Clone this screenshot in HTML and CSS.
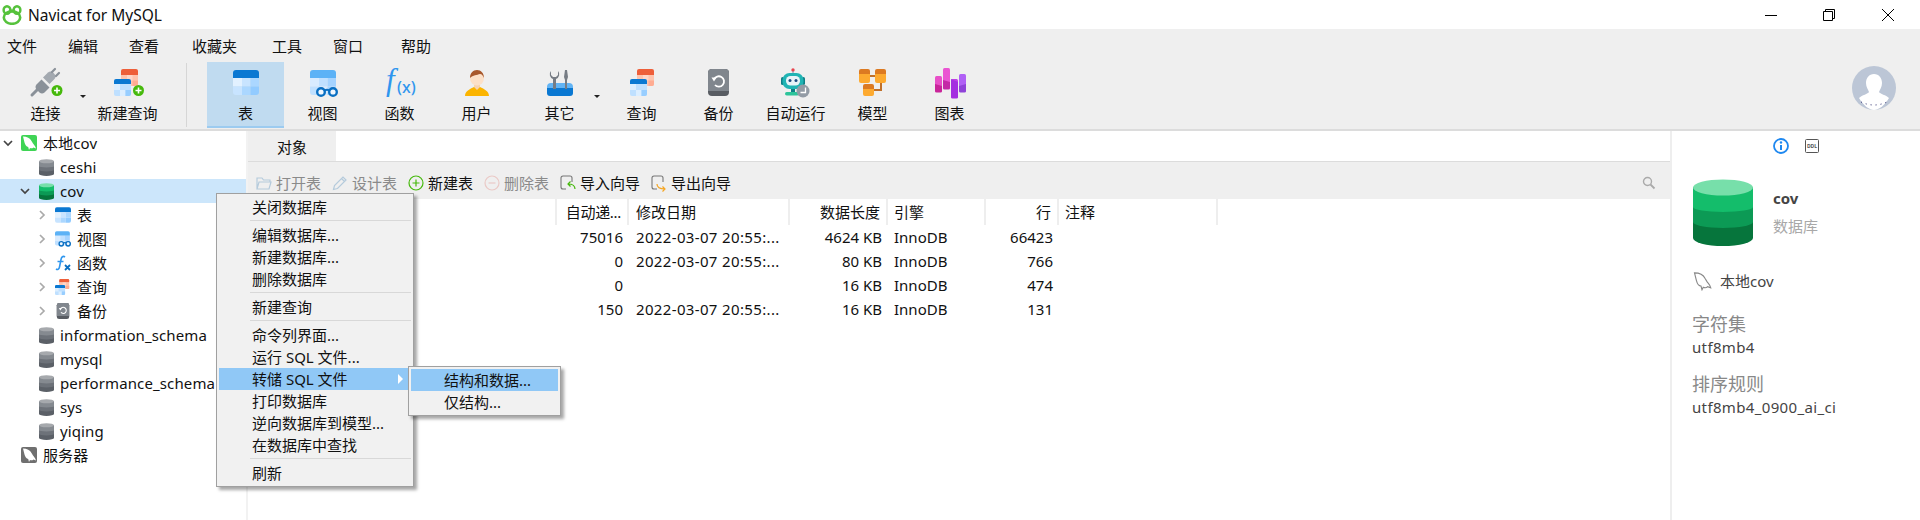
FILE: index.html
```html
<!DOCTYPE html>
<html lang="zh-CN">
<head>
    <meta charset="UTF-8">
    <title>Navicat for MySQL</title>
    <link rel="stylesheet" href="styles.css">
</head>
<body>
<svg class="defs" aria-hidden="true">
    <defs>
        <g id="i-badge">
            <circle cx="0" cy="0" r="5.5" fill="#46b90c"/>
            <path d="M-3 0H3M0-3V3" stroke="#fff" stroke-width="1.6"/>
        </g>
        <g id="i-table">
            <path d="M3 9V4a3 3 0 0 1 3-3h20a3 3 0 0 1 3 3v5z" fill="#0a78d2"/>
            <path d="M3 9h9v8.500H3z" fill="#e2f1ff"/>
            <path d="M12 9h8.500v8.500H12z" fill="#c8e4ff"/>
            <path d="M20.500 9H29v8.500h-8.500z" fill="#abd7ff"/>
            <path d="M3 17.500h9V26H6a3 3 0 0 1-3-3z" fill="#c8e4ff"/>
            <path d="M12 17.500h8.500V26H12z" fill="#abd7ff"/>
            <path d="M20.500 17.500H29V23a3 3 0 0 1-3 3h-5.500z" fill="#92cbff"/>
        </g>
        <g id="i-view">
            <path d="M3 9V4a3 3 0 0 1 3-3h20a3 3 0 0 1 3 3v5z" fill="#5cb2f6"/>
            <path d="M3 9h9v8.500H3zM12 17.500h8.500V26H12z" fill="#d8ebff"/>
            <path d="M12 9h8.500v8.500H12zM3 17.500h9V26H6a3 3 0 0 1-3-3z" fill="#c0e0ff"/>
            <path d="M20.500 9H29v8.500h-8.500z" fill="#a5d3ff"/>
            <path d="M20.500 17.500H29V23a3 3 0 0 1-3 3h-5.500z" fill="#a5d3ff"/>
            <circle cx="14" cy="23" r="3.800" fill="#f0f7ff" stroke="#0a6fc2" stroke-width="2.400"/>
            <circle cx="26" cy="23" r="3.800" fill="#f0f7ff" stroke="#0a6fc2" stroke-width="2.400"/>
            <path d="M17.500 21.500q2.500-1.500 5 0" fill="none" stroke="#0a6fc2" stroke-width="2"/>
        </g>
        <g id="i-func">
            <text x="2" y="21" class="fx-f">f</text>
            <text x="13" y="24" class="fx-x">(x)</text>
        </g>
        <g id="i-user">
            <path d="M4 27c0-5 5-7 9-9h6c4 2 9 4 9 9z" fill="#fbb400"/>
            <path d="M13 15h6v3l-3 3-3-3z" fill="#f6d3b2"/>
            <circle cx="16" cy="9.500" r="7" fill="#fce0c8"/>
            <path d="M9 9c0-5 3-8 7-8s7 3 7 8c-1-2-2-4-4-4-3 1-7 1-10 4z" fill="#a8582c"/>
        </g>
        <g id="i-plug">
            <path d="M2 26l7-7" stroke="#8a9199" stroke-width="3" stroke-linecap="round"/>
            <path d="M6.500 15.500l5-5 8 8-5 5a4 4 0 0 1-5 0l-3-3a4 4 0 0 1 0-5z" fill="#8a9199"/>
            <path d="M13 8.500l5-5a4 4 0 0 1 5 0l1.500 1.500a4 4 0 0 1 0 5l-5 5z" fill="#a3a9b0"/>
            <path d="M22 3l3-3M26 7l3-3" stroke="#8a9199" stroke-width="2.200" stroke-linecap="round"/>
        </g>
        <g id="i-query">
            <path d="M9 6V2a2 2 0 0 1 2-2h13a2 2 0 0 1 2 2v4z" fill="#ee5f3a"/>
            <path d="M9 6h17v9a2 2 0 0 1-2 2H9z" fill="#ffc4ae"/>
            <path d="M15 6h5.500v5.500H15z" fill="#ffd6c8"/>
            <path d="M20.500 11.500H26V15a2 2 0 0 1-2 2h-3.500z" fill="#ffac92"/>
            <path d="M2 16v-4a2 2 0 0 1 2-2h13a2 2 0 0 1 2 2v4z" fill="#0a78d2"/>
            <path d="M2 15h17v10a2 2 0 0 1-2 2H4a2 2 0 0 1-2-2z" fill="#bfe0ff"/>
            <path d="M2 15h6v6H2zM8 21h5.500v6H8z" fill="#dceeff"/>
            <path d="M13.500 21H19v4a2 2 0 0 1-2 2h-3.500z" fill="#98ceff"/>
        </g>
        <g id="i-backup">
            <rect x="5" y="0" width="21" height="27" rx="4" fill="#585c62"/>
            <path d="M5 22V4a4 4 0 0 1 4-4h13a4 4 0 0 1 4 4v18z" fill="#80868d"/>
            <path d="M11 10.500a5.200 5.200 0 1 1 1 5.500" fill="none" stroke="#fff" stroke-width="1.800"/>
            <path d="M8.500 8.500h5l-2.500 4z" fill="#fff"/>
        </g>
        <g id="i-tools">
            <path d="M3 18a4 4 0 0 1 4-4h18a4 4 0 0 1 4 4v3H3z" fill="#63b4f4"/>
            <path d="M3 19h26v5a3 3 0 0 1-3 3H6a3 3 0 0 1-3-3z" fill="#0a78d2"/>
            <path d="M7 2a5 5 0 0 0 2 8v10h3V10a5 5 0 0 0 2-8v4l-2 2h-3L7 6z" fill="#767c84"/>
            <path d="M21 1h2l1 7-1 3v9h-2v-9l-1-3z" fill="#767c84"/>
        </g>
        <g id="i-robot">
            <circle cx="13" cy="2" r="1.700" fill="#e8444d"/>
            <path d="M13 3v3" stroke="#88a" stroke-width="1"/>
            <rect x="1" y="9" width="3" height="8" rx="1.500" fill="#0e7f86"/>
            <rect x="22" y="9" width="3" height="8" rx="1.500" fill="#0e7f86"/>
            <rect x="2.500" y="5" width="21" height="16" rx="7" fill="#20b4b4"/>
            <rect x="6" y="8" width="14" height="9.500" rx="4.500" fill="#e8f4f8"/>
            <circle cx="10" cy="12.500" r="1.500" fill="#1c4a80"/>
            <circle cx="16" cy="12.500" r="1.500" fill="#1c4a80"/>
            <path d="M11 21h4v3h-4z" fill="#0e7f86"/>
            <rect x="5" y="24" width="14" height="3.500" rx="1.700" fill="#2dc49a"/>
            <circle cx="23" cy="23" r="6.500" fill="#939ba5"/>
            <path d="M25.500 19.500v5h-5" fill="none" stroke="#fff" stroke-width="1.300"/>
        </g>
        <g id="i-model">
            <path d="M13 7h6M24 12v9h-7" fill="none" stroke="#c0702a" stroke-width="2"/>
            <path d="M2 5V2a2 2 0 0 1 2-2h7a2 2 0 0 1 2 2v3z" fill="#dc7a22"/>
            <path d="M2 5h11v7a2 2 0 0 1-2 2H4a2 2 0 0 1-2-2z" fill="#fdaa30"/>
            <path d="M18 5V2a2 2 0 0 1 2-2h7a2 2 0 0 1 2 2v3z" fill="#dc7a22"/>
            <path d="M18 5h11v7a2 2 0 0 1-2 2h-7a2 2 0 0 1-2-2z" fill="#fdaa30"/>
            <path d="M6 20v-3a2 2 0 0 1 2-2h7a2 2 0 0 1 2 2v3z" fill="#dc7a22"/>
            <path d="M6 20h11v5a2 2 0 0 1-2 2H8a2 2 0 0 1-2-2z" fill="#fdaa30"/>
        </g>
        <g id="i-chart">
            <rect x="1" y="8" width="7" height="16" rx="1.500" fill="#e84fc8"/>
            <path d="M1 16l7 2v5a1.500 1.500 0 0 1-1.500 1.500h-4A1.500 1.500 0 0 1 1 23z" fill="#c9259a"/>
            <rect x="9" y="0" width="7" height="21" rx="1.500" fill="#ea55d2"/>
            <path d="M9 12l7 2v6a1.500 1.500 0 0 1-1.500 1.500h-4A1.500 1.500 0 0 1 9 20z" fill="#c42aa6"/>
            <rect x="17" y="11" width="7" height="19" rx="1.500" fill="#c03ce8"/>
            <path d="M17 11l7 3v15a1.500 1.500 0 0 1-1.500 1.500h-4A1.500 1.500 0 0 1 17 29z" fill="#a42ee0"/>
            <rect x="25" y="6" width="7" height="18" rx="1.500" fill="#b060f5"/>
            <path d="M25 18l7-2v7a1.500 1.500 0 0 1-1.500 1.500h-4A1.500 1.500 0 0 1 25 23z" fill="#8f42d8"/>
        </g>
        <g id="i-db-green">
            <path d="M0 8.500V59a30 8 0 0 0 60 0V8.500z" fill="#06753c"/>
            <path d="M0 8.500V43a30 6 0 0 0 60 0V8.500z" fill="#0c9a55"/>
            <path d="M0 8.500V28a30 5 0 0 0 60 0V8.500z" fill="#14bd6b"/>
            <ellipse cx="30" cy="8.500" rx="30" ry="8" fill="#77dfaa"/>
        </g>
        <g id="i-db-gray">
            <path d="M0 8.500V59a30 8 0 0 0 60 0V8.500z" fill="#5b6067"/>
            <path d="M0 8.500V43a30 6 0 0 0 60 0V8.500z" fill="#6d7279"/>
            <path d="M0 8.500V28a30 5 0 0 0 60 0V8.500z" fill="#858a90"/>
            <ellipse cx="30" cy="8.500" rx="30" ry="8" fill="#a6a9ad"/>
        </g>
        <path id="i-dolphin" d="M2 1.500C6 1.500 9 3 10.500 6L12 8.500c1 1.500 2.500 2.500 3 5l-2.500-1c-1 1-2.500 1-3.500.5l-1 2-.8-3C5.500 12 4 9.500 3.500 7.500 3 5.500 2.500 3.500 2 1.500z"/>
    </defs>
</svg>

<header class="titlebar">
    <svg class="app-logo" viewBox="0 0 20 20">
        <ellipse cx="10" cy="12.500" rx="8.200" ry="6.300" fill="none" stroke="#56c23c" stroke-width="2.600"/>
        <ellipse cx="5" cy="5" rx="3.400" ry="3.800" fill="none" stroke="#56c23c" stroke-width="2.400"/>
        <ellipse cx="15" cy="5" rx="3.400" ry="3.800" fill="none" stroke="#56c23c" stroke-width="2.400"/>
        <circle cx="10" cy="6" r="1.800" fill="#56c23c"/>
    </svg>
    <span class="app-title">Navicat for MySQL</span>
    <div class="window-controls">
        <span class="win-btn"><svg width="12" height="12" viewBox="0 0 12 12"><path d="M0 6.500h12" stroke="#000"/></svg></span>
        <span class="win-btn"><svg width="12" height="12" viewBox="0 0 12 12"><path d="M.5 2.500h9v9h-9zM2.500 2.500v-2h9v9h-2" fill="none" stroke="#000"/></svg></span>
        <span class="win-btn"><svg width="12" height="12" viewBox="0 0 12 12"><path d="M0 0l12 12M12 0L0 12" stroke="#000"/></svg></span>
    </div>
</header>

<nav class="menubar">
    <span class="menu-item w61">文件</span>
    <span class="menu-item w61">编辑</span>
    <span class="menu-item w63">查看</span>
    <span class="menu-item w80">收藏夹</span>
    <span class="menu-item w61">工具</span>
    <span class="menu-item w68">窗口</span>
    <span class="menu-item">帮助</span>
</nav>

<div class="toolbar">
    <div class="tool has-menu">
        <svg class="tool-icon" viewBox="0 0 32 28"><use href="#i-plug"/><use href="#i-badge" x="27" y="21.500"/></svg>
        <span>连接</span>
    </div>
    <div class="tool">
        <svg class="tool-icon" viewBox="0 0 32 28"><use href="#i-query"/><use href="#i-badge" x="26.500" y="21.500"/></svg>
        <span>新建查询</span>
    </div>
    <div class="tool-sep"></div>
    <div class="tool active">
        <svg class="tool-icon" viewBox="0 0 32 28"><use href="#i-table"/></svg>
        <span>表</span>
    </div>
    <div class="tool">
        <svg class="tool-icon" viewBox="0 0 32 28"><use href="#i-view"/></svg>
        <span>视图</span>
    </div>
    <div class="tool">
        <svg class="tool-icon" viewBox="0 0 32 28"><use href="#i-func"/></svg>
        <span>函数</span>
    </div>
    <div class="tool">
        <svg class="tool-icon" viewBox="0 0 32 28"><use href="#i-user"/></svg>
        <span>用户</span>
    </div>
    <div class="tool has-menu push">
        <svg class="tool-icon" viewBox="0 0 32 28"><use href="#i-tools"/></svg>
        <span>其它</span>
    </div>
    <div class="tool">
        <svg class="tool-icon" viewBox="0 0 32 28"><use href="#i-query" x="2"/></svg>
        <span>查询</span>
    </div>
    <div class="tool">
        <svg class="tool-icon" viewBox="0 0 32 28"><use href="#i-backup"/></svg>
        <span>备份</span>
    </div>
    <div class="tool">
        <svg class="tool-icon" viewBox="0 1 32 28"><use href="#i-robot"/></svg>
        <span>自动运行</span>
    </div>
    <div class="tool">
        <svg class="tool-icon" viewBox="0 0 32 28"><use href="#i-model"/></svg>
        <span>模型</span>
    </div>
    <div class="tool">
        <svg class="tool-icon" viewBox="0 1 32 28"><use href="#i-chart"/></svg>
        <span>图表</span>
    </div>
    <svg class="avatar" viewBox="0 0 44 44">
        <circle cx="22" cy="22" r="22" fill="#bcc6d6"/>
        <path d="M22 8c5 0 8 4 8 9 0 4-2 6-3 9 1 2 7 3 10 6-4 7-10 12-15 12S11 39 7 32c3-3 9-4 10-6-1-3-3-5-3-9 0-5 3-9 8-9z" fill="#fff"/>
        <path d="M9 36q13 6 26 0" fill="none" stroke="#226" stroke-width="1" stroke-dasharray="1 4"/>
    </svg>
</div>

<main class="workspace">
    <aside class="sidebar">
        <div class="tree-row level0">
            <svg class="arrow" viewBox="0 0 10 10"><path d="M1 3l4 4 4-4" class="arrow-open"/></svg>
            <svg class="conn-icon on" viewBox="0 0 16 16"><use href="#i-dolphin" fill="#fff"/></svg>
            <span>本地cov</span>
        </div>
        <div class="tree-row level1">
            <span class="arrow"></span>
            <svg class="db-icon" viewBox="0 0 60 67"><use href="#i-db-gray"/></svg>
            <span>ceshi</span>
        </div>
        <div class="tree-row level1 selected">
            <svg class="arrow" viewBox="0 0 10 10"><path d="M1 3l4 4 4-4" class="arrow-open"/></svg>
            <svg class="db-icon" viewBox="0 0 60 67"><use href="#i-db-green"/></svg>
            <span>cov</span>
        </div>
        <div class="tree-row level2">
            <svg class="arrow" viewBox="0 0 10 10"><path d="M3 1l4 4-4 4" class="arrow-closed"/></svg>
            <svg class="leaf-icon" viewBox="3 1 26 25"><use href="#i-table"/></svg>
            <span>表</span>
        </div>
        <div class="tree-row level2">
            <svg class="arrow" viewBox="0 0 10 10"><path d="M3 1l4 4-4 4" class="arrow-closed"/></svg>
            <svg class="leaf-icon" viewBox="3 1 28 27"><use href="#i-view"/></svg>
            <span>视图</span>
        </div>
        <div class="tree-row level2">
            <svg class="arrow" viewBox="0 0 10 10"><path d="M3 1l4 4-4 4" class="arrow-closed"/></svg>
            <svg class="leaf-icon" viewBox="0 0 16 16">
                <path d="M10 2C8 .5 6.500 2 6 4.500L4.500 12C4 14.500 2.500 15 1 14M2.500 6.500h6" fill="none" stroke="#2f96ee" stroke-width="1.600"/>
                <path d="M10 10l5 5M15 10l-5 5" stroke="#0a6fc2" stroke-width="1.800"/>
            </svg>
            <span>函数</span>
        </div>
        <div class="tree-row level2">
            <svg class="arrow" viewBox="0 0 10 10"><path d="M3 1l4 4-4 4" class="arrow-closed"/></svg>
            <svg class="leaf-icon" viewBox="2 0 27 27"><use href="#i-query"/></svg>
            <span>查询</span>
        </div>
        <div class="tree-row level2">
            <svg class="arrow" viewBox="0 0 10 10"><path d="M3 1l4 4-4 4" class="arrow-closed"/></svg>
            <svg class="leaf-icon" viewBox="2 0 27 27"><use href="#i-backup"/></svg>
            <span>备份</span>
        </div>
        <div class="tree-row level1">
            <span class="arrow"></span>
            <svg class="db-icon" viewBox="0 0 60 67"><use href="#i-db-gray"/></svg>
            <span>information_schema</span>
        </div>
        <div class="tree-row level1">
            <span class="arrow"></span>
            <svg class="db-icon" viewBox="0 0 60 67"><use href="#i-db-gray"/></svg>
            <span>mysql</span>
        </div>
        <div class="tree-row level1">
            <span class="arrow"></span>
            <svg class="db-icon" viewBox="0 0 60 67"><use href="#i-db-gray"/></svg>
            <span>performance_schema</span>
        </div>
        <div class="tree-row level1">
            <span class="arrow"></span>
            <svg class="db-icon" viewBox="0 0 60 67"><use href="#i-db-gray"/></svg>
            <span>sys</span>
        </div>
        <div class="tree-row level1">
            <span class="arrow"></span>
            <svg class="db-icon" viewBox="0 0 60 67"><use href="#i-db-gray"/></svg>
            <span>yiqing</span>
        </div>
        <div class="tree-row level0">
            <span class="arrow"></span>
            <svg class="conn-icon off" viewBox="0 0 16 16"><use href="#i-dolphin" fill="#fff"/></svg>
            <span>服务器</span>
        </div>
    </aside>

    <section class="content">
        <div class="tabs">
            <div class="tab">对象</div>
        </div>
        <div class="obj-toolbar">
            <span class="obj-btn disabled">
                <svg viewBox="0 0 16 16"><path d="M1 14V3h5l1.500 2H14v2M1 14l2-7h12l-2 7z" fill="none" stroke="#b5cbdc" stroke-width="1.200"/></svg>打开表
            </span>
            <span class="obj-btn disabled">
                <svg viewBox="0 0 16 16"><path d="M1.500 14.500l1-4L11 2l3 3-8.500 8.500zM9.500 3.500l3 3" fill="none" stroke="#b5cbdc" stroke-width="1.200"/></svg>设计表
            </span>
            <span class="obj-btn">
                <svg viewBox="0 0 16 16"><circle cx="8" cy="8" r="7" fill="none" stroke="#46b90c" stroke-width="1.200"/><path d="M4.500 8h7M8 4.500v7" stroke="#46b90c" stroke-width="1.200"/></svg>新建表
            </span>
            <span class="obj-btn disabled">
                <svg viewBox="0 0 16 16"><circle cx="8" cy="8" r="7" fill="none" stroke="#eac9c6" stroke-width="1.200"/><path d="M4.500 8h7" stroke="#eac9c6" stroke-width="1.200"/></svg>删除表
            </span>
            <span class="obj-btn">
                <svg viewBox="0 0 16 16"><path d="M6 14H3a2 2 0 0 1-2-2V3a2 2 0 0 1 2-2h7a2 2 0 0 1 2 2v4" fill="none" stroke="#777" stroke-width="1.100"/><path d="M15 14c0-3-2-5-7-5M10.500 6.500L8 9l2.500 2.500" fill="none" stroke="#46b90c" stroke-width="1.200"/></svg>导入向导
            </span>
            <span class="obj-btn">
                <svg viewBox="0 0 16 16"><path d="M6 14H3a2 2 0 0 1-2-2V3a2 2 0 0 1 2-2h7a2 2 0 0 1 2 2v4" fill="none" stroke="#777" stroke-width="1.100"/><path d="M6 9c0 3 2 5 8 5M11.500 11.500L14 14l-2.500 2.500" fill="none" stroke="#f5a623" stroke-width="1.200"/></svg>导出向导
            </span>
            <svg class="search-icon" viewBox="0 0 14 14"><circle cx="5.500" cy="5.500" r="4" fill="none" stroke="#aaa" stroke-width="1.400"/><path d="M8.500 8.500l4 4" stroke="#aaa" stroke-width="1.800"/></svg>
        </div>
        <div class="grid-row grid-head">
            <span></span>
            <span class="num trunc">自动递...</span>
            <span class="date-head">修改日期</span>
            <span class="num">数据长度</span>
            <span>引擎</span>
            <span class="num">行</span>
            <span>注释</span>
        </div>
        <div class="grid-row">
            <span></span>
            <span class="num">75016</span>
            <span class="date">2022-03-07 20:55:...</span>
            <span class="num">4624 KB</span>
            <span>InnoDB</span>
            <span class="num">66423</span>
            <span></span>
        </div>
        <div class="grid-row">
            <span></span>
            <span class="num">0</span>
            <span class="date">2022-03-07 20:55:...</span>
            <span class="num">80 KB</span>
            <span>InnoDB</span>
            <span class="num">766</span>
            <span></span>
        </div>
        <div class="grid-row">
            <span></span>
            <span class="num">0</span>
            <span></span>
            <span class="num">16 KB</span>
            <span>InnoDB</span>
            <span class="num">474</span>
            <span></span>
        </div>
        <div class="grid-row">
            <span></span>
            <span class="num">150</span>
            <span class="date">2022-03-07 20:55:...</span>
            <span class="num">16 KB</span>
            <span>InnoDB</span>
            <span class="num">131</span>
            <span></span>
        </div>
    </section>

    <aside class="info-panel">
        <div class="panel-tabs">
            <svg class="info-icon" viewBox="0 0 16 16"><circle cx="8" cy="8" r="7" fill="none" stroke="#1e88f0" stroke-width="1.800"/><path d="M8 7v5" stroke="#1e88f0" stroke-width="2"/><circle cx="8" cy="4.500" r="1.200" fill="#1e88f0"/></svg>
            <svg class="ddl-icon" viewBox="0 0 14 14"><rect x=".5" y=".5" width="13" height="13" rx="1" fill="none" stroke="#555"/><text x="7" y="9" class="ddl-text">DDL</text></svg>
        </div>
        <div class="panel-head">
            <svg class="panel-db" viewBox="0 0 60 67"><use href="#i-db-green"/></svg>
            <div>
                <div class="panel-name">cov</div>
                <div class="panel-type">数据库</div>
            </div>
        </div>
        <div class="panel-conn">
            <svg viewBox="0 0 16 16"><use href="#i-dolphin" fill="none" stroke="#888" stroke-width=".9"/></svg>
            本地cov
        </div>
        <div class="panel-label first">字符集</div>
        <div class="panel-value">utf8mb4</div>
        <div class="panel-label">排序规则</div>
        <div class="panel-value">utf8mb4_0900_ai_ci</div>
    </aside>

    <div class="context-menu">
        <div class="cm-item">关闭数据库</div>
        <div class="cm-sep"></div>
        <div class="cm-item">编辑数据库...</div>
        <div class="cm-item">新建数据库...</div>
        <div class="cm-item">删除数据库</div>
        <div class="cm-sep"></div>
        <div class="cm-item">新建查询</div>
        <div class="cm-sep"></div>
        <div class="cm-item">命令列界面...</div>
        <div class="cm-item">运行 SQL 文件...</div>
        <div class="cm-item hot has-sub">转储 SQL 文件</div>
        <div class="cm-item">打印数据库</div>
        <div class="cm-item">逆向数据库到模型...</div>
        <div class="cm-item">在数据库中查找</div>
        <div class="cm-sep"></div>
        <div class="cm-item">刷新</div>
    </div>
    <div class="context-menu submenu">
        <div class="cm-item hot">结构和数据...</div>
        <div class="cm-item">仅结构...</div>
    </div>
</main>
</body>
</html>
```

FILE: styles.css
```css
* {
    box-sizing: border-box;
}
html, body {
    margin: 0;
    padding: 0;
}
body {
    width: 1920px;
    height: 520px;
    overflow: hidden;
    background-color: white;
    color: #111;
    font-family: "Noto Sans", "Noto Sans CJK SC", sans-serif;
    font-size: 15px;
    line-height: 20px;
}
.defs {
    display: block;
    width: 0;
    height: 0;
}

/* title bar */
.titlebar {
    display: flex;
    align-items: center;
    height: 29px;
    padding-left: 2px;
}
.app-logo {
    width: 20px;
    height: 20px;
}
.app-title {
    margin-left: 6px;
    font-size: 15.5px;
    color: #111;
}
.window-controls {
    display: flex;
    margin-left: auto;
    padding-right: 3px;
}
.win-btn {
    display: flex;
    justify-content: center;
    align-items: center;
    width: 58.5px;
    height: 29px;
}

/* menu */
.menubar {
    display: flex;
    align-items: center;
    height: 31px;
    padding: 2px 0 0 7px;
    background-color: #efefef;
}
.w61 { width: 61px; }
.w63 { width: 63px; }
.w68 { width: 68px; }
.w80 { width: 80px; }

/* main toolbar */
.toolbar {
    display: flex;
    height: 71px;
    padding: 2px 0 0 7px;
    background-color: #efefef;
    border-bottom: 2px solid #dcdcdc;
}
.tool {
    position: relative;
    display: flex;
    flex-direction: column;
    align-items: center;
    width: 77px;
    height: 66px;
    padding-top: 7px;
}
.tool span {
    margin-top: 6px;
}
.tool-icon {
    display: block;
    width: 32px;
    height: 28px;
    overflow: visible;
}
.tool.active {
    background-color: #c0dbf0;
    border-bottom: 2px solid #9ccbf0;
}
.has-menu {
    margin-right: 5px;
}
.has-menu::after {
    content: "";
    position: absolute;
    right: -2px;
    top: 33px;
    border-top: 3px solid #222;
    border-left: 3px solid transparent;
    border-right: 3px solid transparent;
}
.push {
    margin-left: 6px;
}
.tool-sep {
    width: 1px;
    height: 64px;
    margin: 1px 20px 0 20px;
    background-color: #d6d6d6;
}
.avatar {
    width: 44px;
    height: 44px;
    margin: 4px 24px 0 auto;
}

/* layout below the toolbars */
.workspace {
    position: relative;
    display: flex;
    height: 389px;
}
.sidebar {
    width: 246px;
    margin-right: 2px;
    box-shadow: 2px 0 0 #f2f2f2;
    overflow: hidden;
    letter-spacing: 0.12px;
}
.tree-row {
    display: flex;
    align-items: center;
    height: 24px;
    white-space: nowrap;
}
.tree-row.selected {
    background-color: #cce6fb;
}
.level1 { padding-left: 17px; }
.level2 { padding-left: 34px; }
.arrow {
    flex: none;
    width: 10px;
    height: 10px;
    margin: 0 8px 0 3px;
}
.arrow path {
    fill: none;
    stroke-width: 1.700;
}
.arrow-open { stroke: #444; }
.arrow-closed { stroke: #aaa; }
.conn-icon {
    flex: none;
    width: 16px;
    height: 16px;
    margin-right: 6px;
    border-radius: 2px;
}
.conn-icon.on { background-color: #3fd455; }
.conn-icon.off { background-color: #6f6f6f; }
.db-icon {
    flex: none;
    width: 15px;
    height: 17px;
    margin: 0 6px 0 1px;
}
.leaf-icon {
    flex: none;
    width: 16px;
    height: 16px;
    margin-right: 6px;
}
.fx-f {
    font-family: "Liberation Serif", serif;
    font-style: italic;
    font-size: 31px;
    fill: #2f96ee;
}
.fx-x {
    font-family: "Noto Sans", sans-serif;
    font-weight: 500;
    font-size: 16px;
    fill: #2f96ee;
}

/* centre */
.content {
    width: 1422px;
}
.tabs {
    height: 31px;
    border-bottom: 1px solid #dcdcdc;
}
.tab {
    width: 88px;
    height: 30px;
    line-height: 32px;
    text-align: center;
    background-color: #efefef;
}
.obj-toolbar {
    display: flex;
    align-items: center;
    gap: 11px;
    height: 37px;
    padding: 5px 14px 0 8px;
    background-color: #efefef;
}
.obj-btn {
    display: flex;
    align-items: center;
    gap: 4px;
    white-space: nowrap;
}
.obj-btn svg {
    width: 16px;
    height: 16px;
    overflow: visible;
}
.obj-btn.disabled {
    color: #8a8a8a;
}
.search-icon {
    width: 14px;
    height: 14px;
    margin-left: auto;
}
.grid-row {
    display: grid;
    grid-template-columns: 309px 72px 161px 98px 98px 73px 159px;
    height: 24px;
    line-height: 24px;
    white-space: nowrap;
}
.grid-row span {
    padding: 0 6px;
    overflow: hidden;
}
.grid-row .num {
    text-align: right;
}
.grid-row .date,
.grid-row .date-head {
    padding-left: 7px;
}
.grid-row .date {
    letter-spacing: 0.35px;
}
.grid-row .trunc {
    letter-spacing: -0.3px;
}
.grid-head {
    height: 26px;
    line-height: 27px;
}
.grid-head span {
    border-right: 2px solid #eeeeee;
}

/* right panel */
.info-panel {
    width: 250px;
    padding-left: 20px;
    border-left: 2px solid #eeeeee;
    color: #444;
}
.panel-tabs {
    display: flex;
    justify-content: center;
    align-items: center;
    gap: 16px;
    height: 30px;
    margin-left: -20px;
}
.info-icon {
    width: 16px;
    height: 16px;
}
.ddl-icon {
    width: 14px;
    height: 14px;
}
.ddl-text {
    font-family: "Noto Sans", sans-serif;
    font-weight: 700;
    font-size: 5px;
    text-anchor: middle;
    fill: #555;
}
.panel-head {
    display: flex;
    gap: 20px;
    margin-top: 18px;
}
.panel-db {
    width: 60px;
    height: 67px;
    margin-left: 1px;
}
.panel-name {
    margin-top: 9px;
    font-weight: 700;
}
.panel-type {
    margin-top: 8px;
    color: #a8a8a8;
}
.panel-conn {
    display: flex;
    align-items: center;
    gap: 8px;
    margin-top: 25px;
}
.panel-conn svg {
    width: 20px;
    height: 20px;
}
.panel-label {
    margin-top: 15px;
    font-size: 18px;
    line-height: 24px;
    color: #888;
}
.panel-label.first {
    margin-top: 21px;
}
.panel-value {
    margin-top: 1px;
    letter-spacing: 0.35px;
}

/* context menu */
.context-menu {
    position: absolute;
    left: 216px;
    top: 62px;
    width: 198px;
    padding: 2px;
    background-color: #f1f1f1;
    border: 1px solid #a0a0a0;
    box-shadow: 3px 3px 3px rgba(0, 0, 0, 0.35);
}
.submenu {
    left: 408px;
    top: 235px;
    width: 153px;
}
.cm-item {
    position: relative;
    height: 22px;
    line-height: 22px;
    padding-left: 33px;
    white-space: nowrap;
}
.cm-item.hot {
    background-color: #90c8f6;
}
.has-sub::after {
    content: "";
    position: absolute;
    right: 8px;
    top: 6px;
    border-left: 5px solid white;
    border-top: 5px solid transparent;
    border-bottom: 5px solid transparent;
}
.cm-sep {
    height: 1px;
    margin: 2px 0 3px 31px;
    background-color: #d8d8d8;
}
```
